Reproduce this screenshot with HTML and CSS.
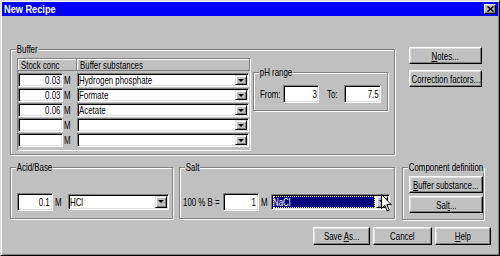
FILE: index.html
```html
<!DOCTYPE html>
<html lang="en">
<head>
  <meta charset="UTF-8">
  <title>New Recipe</title>
  <link rel="stylesheet" href="styles.css">
</head>
<body>
  <div class="window">
    <div class="titlebar">
      <span class="title">New Recipe</span>
      <span class="close">
        <svg width="7" height="6" viewBox="0 0 7 6"><path d="M0.5 0.5L6.5 5.5M6.5 0.5L0.5 5.5" stroke="#000" stroke-width="1.6"/></svg>
      </span>
    </div>

    <div class="client">
      <div class="top-row">
        <div class="group buffer">
          <span class="legend">Buffer</span>
          <div class="table">
            <div class="thead">
              <div class="th th-conc"><span class="tx">Stock conc</span></div>
              <div class="th th-subst"><span class="tx">Buffer substances</span></div>
            </div>
            <div class="tbody">
              <div class="trow">
                <div class="field num row-field"><span class="tx">0.03</span></div><span class="unit"><span class="tx">M</span></span>
                <div class="combo row-combo"><span class="combo-text"><span class="tx">Hydrogen phosphate</span></span><span class="drop"></span></div>
              </div>
              <div class="trow">
                <div class="field num row-field"><span class="tx">0.03</span></div><span class="unit"><span class="tx">M</span></span>
                <div class="combo row-combo"><span class="combo-text"><span class="tx">Formate</span></span><span class="drop"></span></div>
              </div>
              <div class="trow">
                <div class="field num row-field"><span class="tx">0.06</span></div><span class="unit"><span class="tx">M</span></span>
                <div class="combo row-combo"><span class="combo-text"><span class="tx">Acetate</span></span><span class="drop"></span></div>
              </div>
              <div class="trow">
                <div class="field num row-field"></div><span class="unit"><span class="tx">M</span></span>
                <div class="combo row-combo"><span class="combo-text"></span><span class="drop"></span></div>
              </div>
              <div class="trow">
                <div class="field num row-field"></div><span class="unit"><span class="tx">M</span></span>
                <div class="combo row-combo"><span class="combo-text"></span><span class="drop"></span></div>
              </div>
            </div>
          </div>

          <div class="group ph">
            <span class="legend">pH range</span>
            <span class="ph-from"><span class="tx">From:</span></span>
            <div class="field num ph-field"><span class="tx">3</span></div>
            <span class="ph-to"><span class="tx">To:</span></span>
            <div class="field num ph-field wide"><span class="tx">7.5</span></div>
          </div>
        </div>

        <div class="side">
          <button class="btn side-btn"><span class="tx"><u>N</u>otes...</span></button>
          <button class="btn side-btn"><span class="tx">Correction factors...</span></button>
        </div>
      </div>

      <div class="mid-row">
        <div class="group acid">
          <span class="legend">Acid/Base</span>
          <div class="field num big-field"><span class="tx">0.1</span></div>
          <span class="unit2"><span class="tx">M</span></span>
          <div class="combo acid-combo"><span class="combo-text"><span class="tx">HCl</span></span><span class="drop"></span></div>
        </div>

        <div class="group salt">
          <span class="legend">Salt</span>
          <span class="salt-label"><span class="tx">100 % B =</span></span>
          <div class="field num big-field"><span class="tx">1</span></div>
          <span class="unit2 narrow"><span class="tx">M</span></span>
          <div class="combo salt-combo"><span class="combo-text selected"><span class="tx">NaCl</span></span><span class="drop"></span></div>
        </div>

        <div class="group comp">
          <span class="legend">Component definition</span>
          <button class="btn comp-btn"><span class="tx"><u>B</u>uffer substance...</span></button>
          <button class="btn comp-btn"><span class="tx">Sal<u>t</u>...</span></button>
        </div>
      </div>

      <div class="actions">
        <button class="btn act save"><span class="tx">Save <u>A</u>s...</span></button>
        <button class="btn act cancel"><span class="tx">Cancel</span></button>
        <button class="btn act help"><span class="tx"><u>H</u>elp</span></button>
      </div>
    </div>

    <svg class="cursor" width="11" height="18" viewBox="0 0 11 18">
      <path d="M0.5 0.5L0.5 14.5L3.8 11.4L6.2 17L8.2 16.1L5.9 10.6L10.2 10.6Z" fill="#fff" stroke="#000" stroke-width="1"/>
    </svg>
  </div>
</body>
</html>
```

FILE: styles.css
```css
* {
  margin: 0; padding: 0; box-sizing: border-box;
}
body {
  background: #c0c0c0;
  font-family: "Liberation Sans", Arial, sans-serif;
  font-size: 10.5px; color: #000;
  width: 500px; height: 256px; overflow: hidden;
}
/* the dialog font is a narrow one: squeeze the text runs */
.tx {
  display: inline-block; white-space: nowrap;
  transform: scaleX(0.75); transform-origin: left center;
}
.num .tx { transform-origin: right center; }
.btn .tx { transform-origin: center center; }

.window {
  position: relative; width: 500px; height: 256px; padding: 1px;
  background: #c0c0c0;
  border: 1px solid; border-color: #dfdfdf #000 #000 #dfdfdf;
  box-shadow: inset 1px 1px #fff, inset -1px -1px #808080;
}

/* title bar */
.titlebar {
  height: 14px; background: #0000f8;
  display: flex; align-items: center; justify-content: space-between;
  padding: 0 2px 0 2px;
}
.title {
  color: #fff; font-weight: bold; font-size: 11.5px;
  display: inline-block; transform: scaleX(0.8); transform-origin: left center;
}
.close {
  width: 12px; height: 10px; background: #c0c0c0;
  display: flex; align-items: center; justify-content: center;
  border: 1px solid; border-color: #fff #000 #000 #fff;
  box-shadow: inset -1px -1px #808080;
}

/* shared 3d bits */
.group {
  position: relative;
  border: 1px solid #808080;
  box-shadow: inset 1px 1px #fff, 1px 1px #fff;
}
.legend {
  position: absolute; top: -7px; left: 5px;
  padding: 0 1px; line-height: 12px; background: #c0c0c0; white-space: nowrap;
  transform: scaleX(0.75); transform-origin: left center;
}
.field {
  display: flex; align-items: center; background: #fff; white-space: nowrap;
  border: 1px solid; border-color: #808080 #fff #fff #808080;
  box-shadow: inset 1px 1px #000, inset -1px -1px #dfdfdf;
}
.field.num { justify-content: flex-end; padding-right: 2px; }
.combo {
  display: flex; background: #fff;
  border: 1px solid; border-color: #808080 #fff #fff #808080;
  box-shadow: inset 1px 1px #000, inset -1px -1px #dfdfdf;
}
.combo-text {
  flex: 1; display: flex; align-items: center; padding-left: 1px;
  white-space: nowrap; overflow: hidden;
}
.combo-text.selected {
  margin: 1px 0 1px 1px; padding-left: 0; background: #000080; color: #fff;
  outline: 1px dotted #ffff60; outline-offset: -1px;
}
.drop {
  width: 12px; margin: 1px; background: #c0c0c0;
  display: flex; align-items: center; justify-content: center;
  border: 1px solid; border-color: #dfdfdf #000 #000 #dfdfdf;
  box-shadow: inset 1px 1px #fff, inset -1px -1px #808080;
}
.drop::after {
  content: ""; border-style: solid; border-width: 3px 3px 0;
  border-color: #000 transparent transparent;
}
.btn {
  font: inherit; color: #000; background: #c0c0c0; cursor: default;
  display: flex; align-items: center; justify-content: center; white-space: nowrap;
  border: 1px solid; border-color: #fff #000 #000 #fff;
  box-shadow: inset -1px -1px #808080, inset 1px 1px #dfdfdf;
}

/* layout */
.client { padding: 31px 0 0 8px; }
.top-row { display: flex; align-items: flex-start; }
.buffer {
  width: 385px; height: 106px; margin-top: 2px;
  display: flex; align-items: flex-start; padding: 8px 0 0 6px;
}
.table {
  width: 234px; height: 93px;
  border: 1px solid; border-color: #808080 #fff #fff #808080;
}
.thead { display: flex; height: 12px; }
.th {
  display: flex; align-items: center; padding-left: 3px; overflow: hidden;
  border-right: 1px solid #808080; border-bottom: 1px solid #808080;
  box-shadow: inset 1px 1px #fff;
}
.th-conc { width: 59px; }
.th-subst { width: 173px; }
.tbody { display: flex; flex-direction: column; gap: 1px; padding-top: 2px; }
.trow { display: flex; align-items: center; height: 14px; }
.row-field { width: 45px; height: 14px; }
.unit { width: 14px; padding-left: 1px; }
.row-combo { width: 172px; height: 14px; }

.ph {
  width: 135px; height: 39px; margin: 14px 0 0 2px;
  display: flex; align-items: flex-start; padding: 12px 0 0 6px;
}
.ph-from { width: 23px; line-height: 18px; }
.ph-to { width: 17px; margin-left: 8px; line-height: 18px; }
.ph-field { width: 36px; height: 18px; }
.ph .field.num { padding-right: 1px; }
.ph-field.wide { width: 37px; }

.side { display: flex; flex-direction: column; gap: 6px; margin-left: 14px; }
.side-btn { width: 73px; height: 17px; }

.mid-row { display: flex; align-items: flex-start; margin-top: 12px; }
.acid, .salt {
  height: 52px; display: flex; align-items: center; align-content: flex-start;
  padding-top: 17px;
}
.acid > *, .salt > * { flex: none; }
.acid { width: 163px; padding-left: 6px; }
.salt { width: 216px; margin-left: 6px; padding-left: 3px; }
.big-field { width: 36px; height: 18px; }
.unit2 { width: 15px; padding-left: 2px; }
.unit2.narrow { width: 12px; }
.acid-combo { width: 101px; height: 16px; }
.salt-label { width: 40px; }
.salt-combo { width: 119px; height: 16px; }
.comp {
  width: 82px; height: 53px; margin-left: 7px;
  display: flex; flex-direction: column; gap: 3px; padding: 8px 0 0 6px;
}
.comp-btn { width: 74px; height: 17px; }

.actions { display: flex; justify-content: flex-end; gap: 3px; margin-top: 7px; padding-right: 7px; }
.act { height: 18px; }
.save { width: 57px; }
.cancel { width: 59px; }
.help { width: 56px; }

.cursor { position: absolute; left: 380px; top: 193px; }
```
